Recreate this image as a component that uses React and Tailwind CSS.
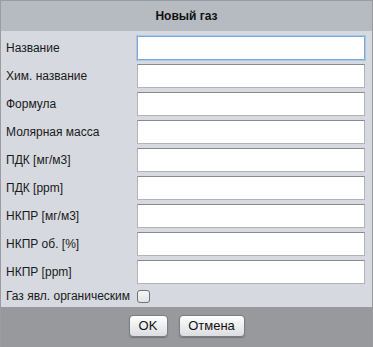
import React from 'react';

const fields = [
  'Название',
  'Хим. название',
  'Формула',
  'Молярная масса',
  'ПДК [мг/м3]',
  'ПДК [ppm]',
  'НКПР [мг/м3]',
  'НКПР об. [%]',
  'НКПР [ppm]',
];

const App = () => {
  return (
    <div
      className="w-[373px] h-[347px] flex flex-col border-x border-t border-[#9b9c9f] text-[12px] text-[#1a1a1a]"
      style={{ fontFamily: '"Liberation Sans", Arial, sans-serif' }}
    >
      {/* Header */}
      <div className="h-[30px] bg-[#b6bac1] flex items-center justify-center font-bold text-[#111]">
        Новый газ
      </div>

      {/* Form */}
      <div className="flex-1 bg-[#d6d9e0] pl-[5px] pr-[6px] pt-[5px]">
        <div className="flex flex-col gap-[4px]">
          {fields.map((label, i) => (
            <div key={label} className="flex items-center h-[24px]">
              <span className="w-[131px] shrink-0">{label}</span>
              <input
                type="text"
                className={
                  i === 0
                    ? 'w-[228px] h-[24px] bg-white border border-[#7fa8d6] ring-1 ring-[#a9c6e6] outline-none'
                    : 'w-[228px] h-[24px] bg-white border border-[#b3b3b3] border-t-[#8a8a8a] outline-none'
                }
              />
            </div>
          ))}
          <div className="flex items-center h-[16px]">
            <span className="w-[131px] shrink-0 whitespace-nowrap">Газ явл. органическим</span>
            <span className="w-[13px] h-[13px] rounded-[3px] border border-[#6f7377] bg-gradient-to-b from-[#f6f6f6] to-[#e2e4e7]"></span>
          </div>
        </div>
      </div>

      {/* Footer */}
      <div className="h-[40px] bg-[#98999c] flex items-start justify-center gap-[11px] pt-[8px]">
        <button className="w-[39px] h-[22px] rounded-[4px] border border-[#7c7d80] bg-gradient-to-b from-white to-[#dcdde0] shadow-[0_1px_1px_rgba(0,0,0,0.25)] text-[13px] text-[#111]">
          OK
        </button>
        <button className="w-[66px] h-[22px] rounded-[4px] border border-[#7c7d80] bg-gradient-to-b from-white to-[#dcdde0] shadow-[0_1px_1px_rgba(0,0,0,0.25)] text-[13px] text-[#111]">
          Отмена
        </button>
      </div>
    </div>
  );
};

export default App;
